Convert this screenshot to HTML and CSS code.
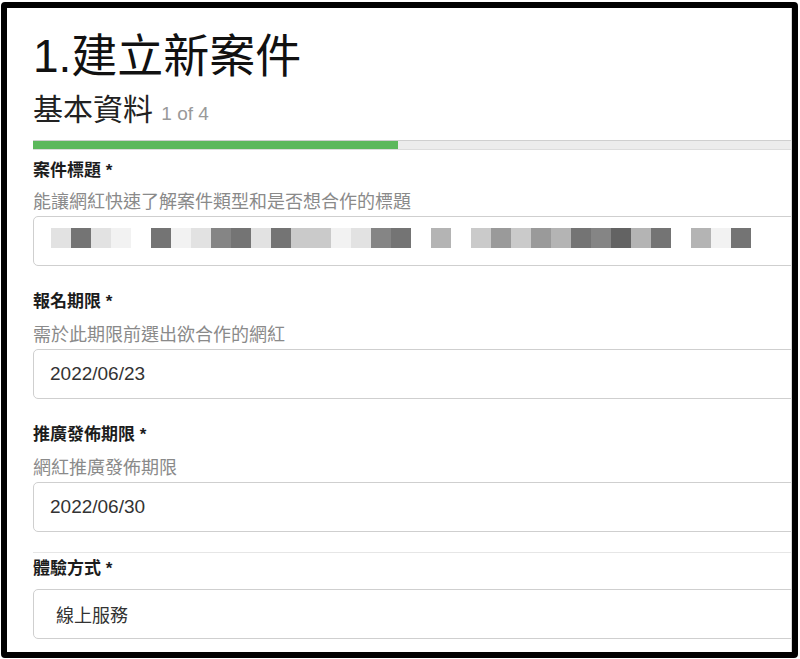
FILE: index.html
```html
<!DOCTYPE html>
<html lang="zh-Hant">
<head>
    <meta charset="UTF-8">
    <meta name="viewport" content="width=device-width, initial-scale=1.0">
    <title>建立新案件</title>
    <link rel="stylesheet" href="styles.css">
</head>
<body>
    <div class="frame">
        <div class="sheet">
            <div class="form">
                <h1 class="page-title">1. 建立新案件</h1>
                <h2 class="step-title">基本資料 <small class="step-count">1 of 4</small></h2>
                <div class="progress"><div class="progress-bar" style="width: 25%"></div></div>

                <div class="field first">
                    <label class="field-label">案件標題 *</label>
                    <div class="hint">能讓網紅快速了解案件類型和是否想合作的標題</div>
                    <div class="input mosaic-input">
                        <!-- title is blurred out in the screenshot -->
                        <div class="mosaic">
                            <span class="m2"></span><span class="m7"></span><span class="m2"></span><span class="m1"></span><span class="m0"></span>
                            <span class="m7"></span><span class="m1"></span><span class="m2"></span><span class="m6"></span><span class="m7"></span>
                            <span class="m2"></span><span class="m7"></span><span class="m3"></span><span class="m3"></span><span class="m1"></span>
                            <span class="m2"></span><span class="m6"></span><span class="m7"></span><span class="m0"></span><span class="m4"></span>
                            <span class="m0"></span><span class="m3"></span><span class="m5"></span><span class="m3"></span><span class="m5"></span>
                            <span class="m4"></span><span class="m7"></span><span class="m6"></span><span class="m8"></span><span class="m4"></span>
                            <span class="m7"></span><span class="m0"></span><span class="m4"></span><span class="m1"></span><span class="m7"></span>
                        </div>
                    </div>
                </div>

                <div class="field">
                    <label class="field-label">報名期限 *</label>
                    <div class="hint">需於此期限前選出欲合作的網紅</div>
                    <div class="input">2022/06/23</div>
                </div>

                <div class="field">
                    <label class="field-label">推廣發佈期限 *</label>
                    <div class="hint">網紅推廣發佈期限</div>
                    <div class="input">2022/06/30</div>
                </div>

                <div class="field divided">
                    <label class="field-label">體驗方式 *</label>
                    <div class="input select">線上服務</div>
                </div>
            </div>
        </div>
    </div>
</body>
</html>
```

FILE: styles.css
```css
:root {
    --text-dark: #1c1c1c;
    --text-hint: #8a8a8a;
    --border-color: #cfcfcf;
    --progress-green: #5cb85c;
}

body {
    margin: 0;
    font-family: "Liberation Sans", "Noto Sans CJK TC", sans-serif;
    background: #fff;
    color: var(--text-dark);
}

/* black outline round the screenshot */
.frame {
    margin: 2px 2px 1px 1px;
    height: 656px;
    border: 6px solid #000;
    border-radius: 4px;
    box-sizing: border-box;
    overflow: hidden;
}

.sheet {
    height: 100%;
    padding-left: 26px;
    border-right: 1px solid #d6d6d6;
    box-sizing: border-box;
    overflow: hidden;
}

/* the real form is wider than the visible part */
.form {
    width: 1460px;
}

.page-title {
    margin: 22px 0 0;
    font-size: 46px;
    line-height: 52px;
    font-weight: 400;
    word-spacing: -13px;
    color: #111;
}

.step-title {
    margin: 10px 0 0;
    font-size: 30px;
    line-height: 36px;
    font-weight: 400;
    color: #222;
}

.step-count {
    font-size: 19px;
    color: #999;
}

.progress {
    margin-top: 8px;
    height: 10px;
    box-sizing: border-box;
    background: #ececec;
    border-top: 1px solid #cfcfcf;
    border-bottom: 1px solid #dcdcdc;
}

.progress-bar {
    height: 100%;
    background: var(--progress-green);
}

.field {
    margin-top: 24px;
}

.field.first {
    margin-top: 9px;
}

.field.divided {
    margin-top: 20px;
    padding-top: 4px;
    border-top: 1px solid #e6e6e6;
}

.field-label {
    display: block;
    font-size: 17px;
    line-height: 24px;
    font-weight: 700;
    color: var(--text-dark);
}

.hint {
    margin-top: 9px;
    font-size: 18px;
    line-height: 24px;
    color: var(--text-hint);
}

.field.first .hint {
    margin-top: 7px;
}

.input {
    margin-top: 2px;
    height: 50px;
    padding-left: 16px;
    display: flex;
    align-items: center;
    box-sizing: border-box;
    border: 1px solid var(--border-color);
    border-radius: 5px;
    font-size: 19px;
    color: #333;
}

.field.divided .input {
    margin-top: 8px;
}

.input.select {
    padding-left: 22px;
    font-size: 18px;
}

.mosaic-input {
    padding-left: 17px;
    padding-bottom: 6px;
}

.mosaic {
    display: flex;
    height: 20px;
}

.mosaic span {
    width: 20px;
}

.m0 { background: #ffffff; }
.m1 { background: #f2f2f2; }
.m2 { background: #e2e2e2; }
.m3 { background: #cacaca; }
.m4 { background: #b4b4b4; }
.m5 { background: #9a9a9a; }
.m6 { background: #858585; }
.m7 { background: #747474; }
.m8 { background: #636363; }
```
